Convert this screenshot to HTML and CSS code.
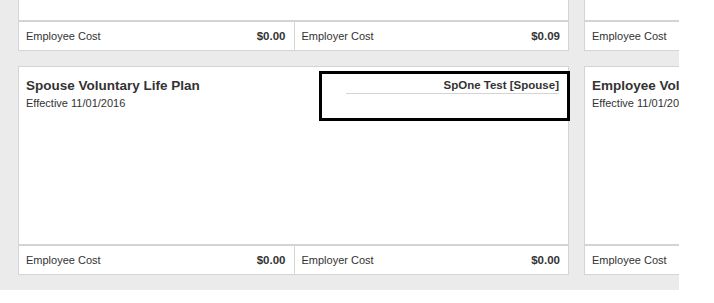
FILE: index.html
```html
<!DOCTYPE html>
<html lang="en">
  <head>
    <meta charset="UTF-8" />
    <meta name="viewport" content="width=device-width, initial-scale=1.0" />
    <title>Benefit Plans</title>
    <link rel="stylesheet" href="styles.css">
  </head>
  <body>
    <div class="viewport">
      <div class="plans">
        <div class="plan">
          <div class="plan-body"></div>
          <div class="plan-costs">
            <div class="cost"><span>Employee Cost</span><b>$0.00</b></div>
            <div class="cost"><span>Employer Cost</span><b>$0.09</b></div>
          </div>
        </div>
        <div class="plan">
          <div class="plan-body"></div>
          <div class="plan-costs">
            <div class="cost"><span>Employee Cost</span><b>$0.00</b></div>
            <div class="cost"><span>Employer Cost</span><b>$0.09</b></div>
          </div>
        </div>

        <div class="plan">
          <div class="plan-body">
            <div class="plan-info">
              <h2>Spouse Voluntary Life Plan</h2>
              <p>Effective 11/01/2016</p>
            </div>
            <div class="covered">
              <div class="covered-name">SpOne Test [Spouse]</div>
            </div>
          </div>
          <div class="plan-costs">
            <div class="cost"><span>Employee Cost</span><b>$0.00</b></div>
            <div class="cost"><span>Employer Cost</span><b>$0.00</b></div>
          </div>
          <div class="highlight"></div>
        </div>
        <div class="plan">
          <div class="plan-body">
            <div class="plan-info">
              <h2>Employee Voluntary Life Plan</h2>
              <p>Effective 11/01/2016</p>
            </div>
          </div>
          <div class="plan-costs">
            <div class="cost"><span>Employee Cost</span><b>$0.00</b></div>
            <div class="cost"><span>Employer Cost</span><b>$0.00</b></div>
          </div>
        </div>
      </div>
    </div>
  </body>
</html>
```

FILE: styles.css
```css
* {
  margin: 0;
  padding: 0;
  box-sizing: border-box;
}

body {
  background-color: #fff;
  font-family: 'Liberation Sans', Arial, sans-serif;
  font-size: 11px;
  color: #333;
}

.viewport {
  width: 679px;
  height: 290px;
  background-color: #ebebeb;
  overflow: hidden;
}

.plans {
  display: grid;
  grid-template-columns: 551px 551px;
  grid-auto-rows: 209px;
  gap: 15px;
  padding-left: 18px;
  margin-top: -158px;
}

.plan {
  position: relative;
  display: flex;
  flex-direction: column;
  background-color: #fff;
  border: 1px solid #d4d4d4;
}

.plan-body {
  flex: 1;
  display: flex;
  justify-content: space-between;
  padding: 10px 9px 0 7px;
}

.plan-info h2 {
  font-size: 13.5px;
  line-height: 18px;
  font-weight: bold;
  white-space: nowrap;
}

.plan-info p {
  line-height: 16px;
  white-space: nowrap;
}

.covered {
  width: 213px;
}

.covered-name {
  text-align: right;
  font-weight: bold;
  font-size: 11.5px;
  line-height: 16px;
  border-bottom: 1px solid #d4d4d4;
}

.plan-costs {
  display: grid;
  grid-template-columns: 1fr 1fr;
  height: 30px;
  border-top: 2px solid #d4d4d4;
}

.cost {
  display: flex;
  align-items: center;
  justify-content: space-between;
  padding: 0 8px 0 7px;
  white-space: nowrap;
}

.cost + .cost {
  border-left: 1px solid #d4d4d4;
}

.cost b {
  font-size: 11.5px;
}

.highlight {
  position: absolute;
  left: 300px;
  top: 4px;
  width: 251px;
  height: 50px;
  border: 3px solid #000;
}
```
